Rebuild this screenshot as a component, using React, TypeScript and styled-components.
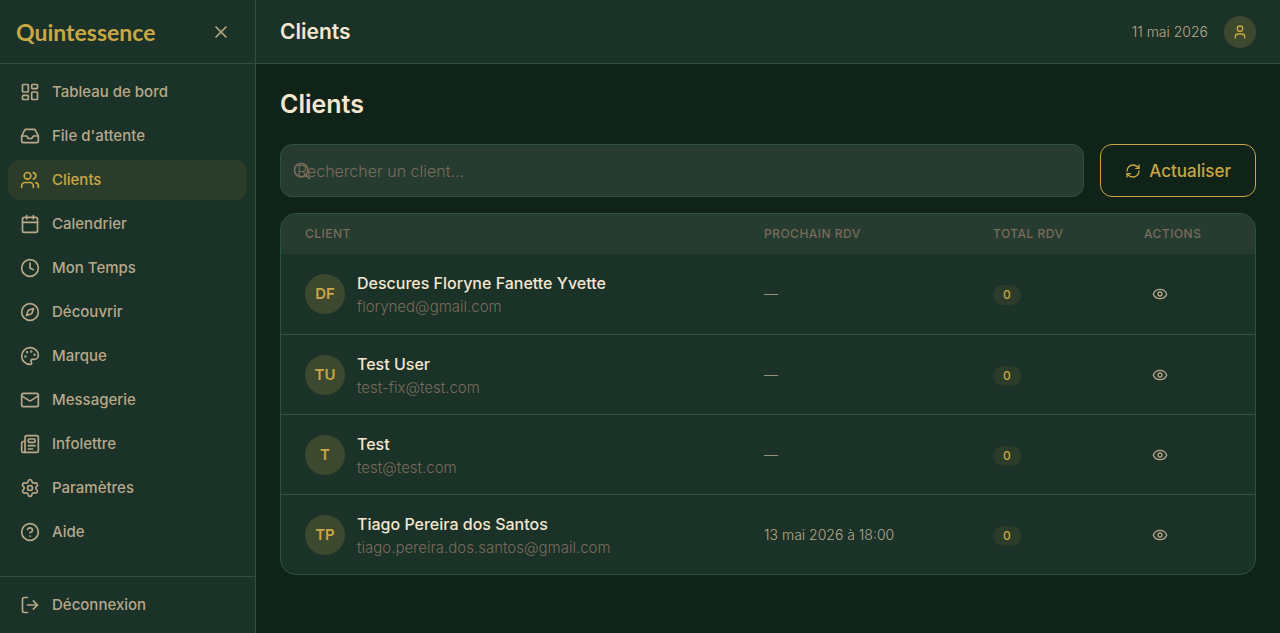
import React from "react";
import styled, { createGlobalStyle } from "styled-components";
import {
  Calendar,
  CircleHelp,
  Clock,
  Compass,
  Eye,
  Inbox,
  LayoutDashboard,
  LogOut,
  Mail,
  Newspaper,
  Palette,
  RefreshCw,
  Search,
  Settings,
  User,
  Users,
  X,
  type LucideIcon,
} from "lucide-react";

const color = {
  page: "#0f2318",
  surface: "#1a3228",
  raised: "#263c31",
  border: "#2d5242",
  gold: "#c9a646",
  goldSoft: "rgba(201, 166, 70, 0.1)",
  goldMedium: "rgba(201, 166, 70, 0.2)",
  cream: "#f5e6d0",
  sand: "#b8a88a",
  muted: "#7a6b5a",
};

const GlobalStyle = createGlobalStyle`
  *, *::before, *::after { box-sizing: border-box; }
  body {
    margin: 0;
    background: ${color.page};
    color: ${color.cream};
    font-family: Inter, "Liberation Sans", sans-serif;
    font-size: 16px;
    line-height: 24px;
  }
  h1, h2, p { margin: 0; }
  button, input { font: inherit; }
`;

const Shell = styled.div`
  display: flex;
  min-height: 100vh;
`;

const Sidebar = styled.aside`
  display: flex;
  flex-direction: column;
  flex: 0 0 256px;
  background: ${color.surface};
  border-right: 1px solid ${color.border};
`;

const Brand = styled.div`
  display: flex;
  align-items: center;
  justify-content: space-between;
  height: 64px;
  padding: 0 16px;
  border-bottom: 1px solid ${color.border};
`;

const Logo = styled.span`
  color: ${color.gold};
  font-family: Lato, "Liberation Sans", sans-serif;
  font-size: 23px;
  font-weight: 700;
  line-height: 36px;
`;

const IconButton = styled.button`
  display: inline-flex;
  padding: 8px;
  border: 0;
  border-radius: 8px;
  background: none;
  color: ${color.sand};
  cursor: pointer;
`;

const Nav = styled.nav`
  display: flex;
  flex: 1;
  flex-direction: column;
  gap: 4px;
  padding: 8px;
`;

const NavLink = styled.a<{ $active?: boolean }>`
  display: flex;
  align-items: center;
  gap: 12px;
  height: 40px;
  padding: 0 12px;
  border-radius: 12px;
  background: ${(p) => (p.$active ? color.goldSoft : "transparent")};
  color: ${(p) => (p.$active ? color.gold : color.sand)};
  font-size: 15px;
  font-weight: 500;
  text-decoration: none;
`;

const SidebarFooter = styled.div`
  padding: 8px;
  border-top: 1px solid ${color.border};
`;

const LogoutButton = styled(NavLink).attrs({ as: "button", type: "button" })`
  width: 100%;
  border: 0;
  cursor: pointer;
`;

const Main = styled.div`
  display: flex;
  flex: 1;
  flex-direction: column;
  min-width: 0;
`;

const Topbar = styled.header`
  display: flex;
  align-items: center;
  justify-content: space-between;
  height: 64px;
  padding: 0 24px;
  background: ${color.surface};
  border-bottom: 1px solid ${color.border};
`;

const TopbarTitle = styled.h1`
  font-size: 21px;
  font-weight: 600;
  line-height: 28px;
`;

const Account = styled.div`
  display: flex;
  align-items: center;
  gap: 16px;
`;

const DateText = styled.span`
  color: ${color.sand};
  font-size: 14px;
  font-weight: 300;
`;

const Avatar = styled.span<{ $size: number }>`
  display: inline-flex;
  flex: none;
  align-items: center;
  justify-content: center;
  width: ${(p) => p.$size}px;
  height: ${(p) => p.$size}px;
  border-radius: 50%;
  background: ${color.goldMedium};
  color: ${color.gold};
  font-size: 15px;
  font-weight: 600;
`;

const Content = styled.main`
  display: flex;
  flex-direction: column;
  gap: 16px;
  padding: 24px;
`;

const PageTitle = styled.h2`
  margin-bottom: 8px;
  font-size: 25px;
  font-weight: 600;
  line-height: 32px;
`;

const Toolbar = styled.div`
  display: flex;
  gap: 16px;
  height: 53px;
`;

const SearchField = styled.label`
  position: relative;
  display: flex;
  flex: 1;
`;

const SearchIcon = styled(Search)`
  position: absolute;
  top: 17px;
  left: 12px;
  color: ${color.muted};
`;

const SearchInput = styled.input`
  width: 100%;
  padding: 0 16px;
  border: 1px solid ${color.border};
  border-radius: 12px;
  background: ${color.raised};
  color: ${color.cream};
  font-weight: 300;

  &::placeholder {
    color: ${color.muted};
    opacity: 1;
  }
`;

const OutlineButton = styled.button`
  display: flex;
  align-items: center;
  gap: 8px;
  padding: 0 24px;
  border: 1px solid ${color.gold};
  border-radius: 12px;
  background: transparent;
  color: ${color.gold};
  font-size: 17px;
  font-weight: 500;
  cursor: pointer;
`;

const Card = styled.section`
  overflow: hidden;
  border: 1px solid ${color.border};
  border-radius: 16px;
  background: ${color.surface};
`;

const Table = styled.table`
  width: 100%;
  border-spacing: 0;
  table-layout: fixed;
`;

const HeadCell = styled.th<{ $width?: number }>`
  width: ${(p) => (p.$width ? `${p.$width}px` : "auto")};
  height: 40px;
  padding: 0 24px;
  background: ${color.raised};
  color: ${color.muted};
  font-size: 12px;
  font-weight: 500;
  letter-spacing: 0.04em;
  line-height: 16px;
  text-align: left;
  text-transform: uppercase;
  white-space: nowrap;
`;

const Row = styled.tr`
  &:not(:first-child) > td {
    border-top: 1px solid ${color.border};
  }
`;

const Cell = styled.td`
  height: 80px;
  padding: 0 24px;
  color: ${color.sand};
  font-size: 14px;
  font-weight: 300;
`;

const Client = styled.div`
  display: flex;
  align-items: center;
  gap: 12px;
  font-size: 16px;
`;

const ClientText = styled.div`
  padding-top: 2px;
`;

const ClientName = styled.p`
  color: ${color.cream};
  font-weight: 500;
`;

const ClientEmail = styled.p`
  color: ${color.muted};
  font-size: 15px;
`;

const Badge = styled.span`
  display: inline-block;
  padding: 0 10px;
  border-radius: 10px;
  background: ${color.goldSoft};
  color: ${color.gold};
  font-size: 12px;
  font-weight: 500;
  line-height: 20px;
`;

const navItems: { label: string; icon: LucideIcon; active?: boolean }[] = [
  { label: "Tableau de bord", icon: LayoutDashboard },
  { label: "File d'attente", icon: Inbox },
  { label: "Clients", icon: Users, active: true },
  { label: "Calendrier", icon: Calendar },
  { label: "Mon Temps", icon: Clock },
  { label: "Découvrir", icon: Compass },
  { label: "Marque", icon: Palette },
  { label: "Messagerie", icon: Mail },
  { label: "Infolettre", icon: Newspaper },
  { label: "Paramètres", icon: Settings },
  { label: "Aide", icon: CircleHelp },
];

const clients = [
  { initials: "DF", name: "Descures Floryne Fanette Yvette", email: "floryned@gmail.com", next: "—", total: 0 },
  { initials: "TU", name: "Test User", email: "test-fix@test.com", next: "—", total: 0 },
  { initials: "T", name: "Test", email: "test@test.com", next: "—", total: 0 },
  {
    initials: "TP",
    name: "Tiago Pereira dos Santos",
    email: "tiago.pereira.dos.santos@gmail.com",
    next: "13 mai 2026 à 18:00",
    total: 0,
  },
];

export default function App() {
  return (
    <Shell>
      <GlobalStyle />
      <Sidebar>
        <Brand>
          <Logo>Quintessence</Logo>
          <IconButton type="button" aria-label="Fermer le menu">
            <X size={20} />
          </IconButton>
        </Brand>
        <Nav>
          {navItems.map(({ label, icon: Icon, active }) => (
            <NavLink key={label} href="#" $active={active}>
              <Icon size={20} />
              {label}
            </NavLink>
          ))}
        </Nav>
        <SidebarFooter>
          <LogoutButton>
            <LogOut size={20} />
            Déconnexion
          </LogoutButton>
        </SidebarFooter>
      </Sidebar>
      <Main>
        <Topbar>
          <TopbarTitle>Clients</TopbarTitle>
          <Account>
            <DateText>11 mai 2026</DateText>
            <Avatar $size={32}>
              <User size={16} />
            </Avatar>
          </Account>
        </Topbar>
        <Content>
          <PageTitle>Clients</PageTitle>
          <Toolbar>
            <SearchField>
              <SearchInput type="text" placeholder="Rechercher un client..." aria-label="Rechercher un client" />
              <SearchIcon size={20} />
            </SearchField>
            <OutlineButton type="button">
              <RefreshCw size={16} />
              Actualiser
            </OutlineButton>
          </Toolbar>
          <Card>
            <Table>
              <thead>
                <tr>
                  <HeadCell>Client</HeadCell>
                  <HeadCell $width={229}>Prochain RDV</HeadCell>
                  <HeadCell $width={151}>Total RDV</HeadCell>
                  <HeadCell $width={135}>Actions</HeadCell>
                </tr>
              </thead>
              <tbody>
                {clients.map((c) => (
                  <Row key={c.email}>
                    <Cell>
                      <Client>
                        <Avatar $size={40}>{c.initials}</Avatar>
                        <ClientText>
                          <ClientName>{c.name}</ClientName>
                          <ClientEmail>{c.email}</ClientEmail>
                        </ClientText>
                      </Client>
                    </Cell>
                    <Cell>{c.next}</Cell>
                    <Cell>
                      <Badge>{c.total}</Badge>
                    </Cell>
                    <Cell>
                      <IconButton type="button" aria-label={`Voir ${c.name}`}>
                        <Eye size={16} />
                      </IconButton>
                    </Cell>
                  </Row>
                ))}
              </tbody>
            </Table>
          </Card>
        </Content>
      </Main>
    </Shell>
  );
}
